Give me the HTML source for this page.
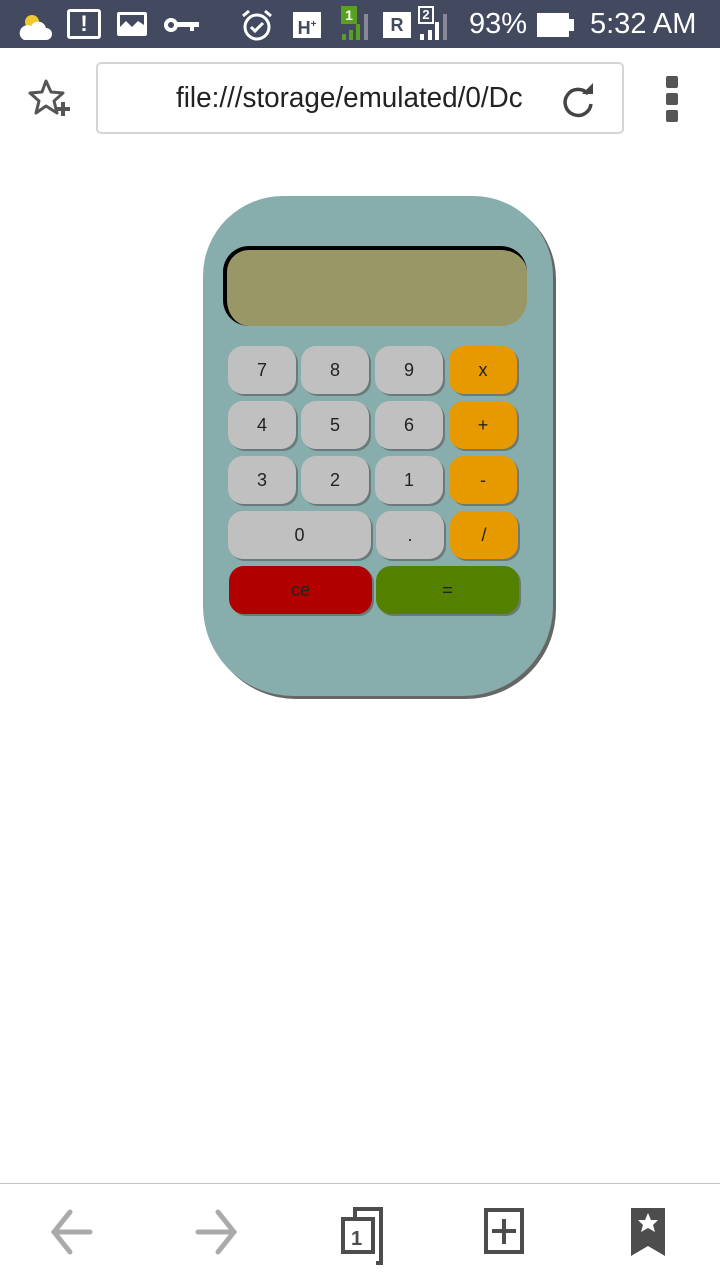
<!DOCTYPE html>
<html><head><meta charset="utf-8"><style>
*{margin:0;padding:0;box-sizing:border-box}
body{width:720px;height:1280px;background:#fff;position:relative;overflow:hidden;font-family:"Liberation Sans",sans-serif}
.sb{position:absolute;left:0;top:0;width:720px;height:48px;background:#434a60;color:#fff}
.abs{position:absolute}
.url{position:absolute;left:96px;top:62px;width:528px;height:72px;border:2px solid #d4d4d4;border-radius:5px}
.calc{position:absolute;left:203px;top:196px;width:350px;height:500px;background:#87adac;border-radius:80px 80px 90px 90px;box-shadow:3px 3px 0 #666}
.disp{position:absolute;left:223px;top:246px;width:304px;height:80px;background:#999766;border-radius:26px;border-top:4px solid #000;border-left:4px solid #000}
.b{position:absolute;width:68px;height:48px;border-radius:15px;background:#c0c0c0;font-size:18px;color:#222;display:flex;align-items:center;justify-content:center;box-shadow:2px 2px 0 #6a7a7a}
.o{background:#e69a00}
</style></head><body>
<div class="sb">
<svg class="abs" style="left:18px;top:8px" width="38" height="34"><circle cx="14" cy="14" r="7" fill="#f0c830"/><path d="M6 32h22a6 6 0 0 0 0-12 8 8 0 0 0-15-2 6 6 0 0 0-7 14z" fill="#fff"/></svg>
<div class="abs" style="left:67px;top:9px;width:34px;height:30px;border:3px solid #fff;border-radius:3px;color:#fff;font-weight:bold;font-size:22px;text-align:center;line-height:24px">!</div>
<div class="abs" style="left:117px;top:12px;width:30px;height:24px;border:3px solid #fff;border-radius:2px"><svg width="24" height="18"><path d="M0 18L0 12 6 6 12 12 18 6 24 10 24 18z" fill="#fff"/></svg></div>
<svg class="abs" style="left:162px;top:15px" width="38" height="20"><circle cx="9" cy="10" r="7" fill="#fff"/><circle cx="9" cy="10" r="3" fill="#434a60"/><rect x="15" y="7" width="22" height="5" fill="#fff"/><rect x="28" y="10" width="4" height="6" fill="#fff"/></svg>
<svg class="abs" style="left:240px;top:8px" width="34" height="34"><circle cx="17" cy="19" r="12" stroke="#fff" stroke-width="3" fill="none"/><path d="M11 19l4 4 8-8" stroke="#fff" stroke-width="3" fill="none"/><path d="M3 8l6-5M31 8l-6-5" stroke="#fff" stroke-width="3"/></svg>
<div class="abs" style="left:293px;top:12px;width:28px;height:26px;background:#fff;color:#434a60;font-weight:bold;font-size:18px;line-height:26px;text-align:center">H<sup style="font-size:10px">+</sup></div>
<div class="abs" style="left:341px;top:6px;width:16px;height:18px;background:#5aa020;color:#fff;font-size:14px;font-weight:bold;text-align:center;line-height:18px">1</div>
<svg class="abs" style="left:340px;top:10px" width="36" height="32"><rect x="2" y="24" width="4" height="6" fill="#5aa020"/><rect x="9" y="20" width="4" height="10" fill="#5aa020"/><rect x="16" y="14" width="4" height="16" fill="#5aa020"/><rect x="24" y="4" width="4" height="26" fill="#889"/></svg>
<div class="abs" style="left:383px;top:12px;width:28px;height:26px;background:#fff;color:#434a60;font-weight:bold;font-size:18px;line-height:26px;text-align:center">R</div>
<div class="abs" style="left:418px;top:6px;width:16px;height:18px;border:2px solid #fff;color:#fff;font-size:13px;font-weight:bold;text-align:center;line-height:14px">2</div>
<svg class="abs" style="left:418px;top:10px" width="36" height="32"><rect x="2" y="24" width="4" height="6" fill="#fff"/><rect x="10" y="20" width="4" height="10" fill="#fff"/><rect x="17" y="12" width="4" height="18" fill="#fff"/><rect x="25" y="4" width="4" height="26" fill="#889"/></svg>
<div class="abs" style="left:469px;top:8px;font-size:29px">93%</div>
<div class="abs" style="left:537px;top:13px;width:32px;height:24px;background:#fff"></div>
<div class="abs" style="left:569px;top:19px;width:5px;height:12px;background:#fff"></div>
<div class="abs" style="left:590px;top:8px;font-size:29px">5:32 AM</div>
</div>
<svg class="abs" style="left:26px;top:78px" width="48" height="42"><path d="M20 3l5 11 12 1-9 8 3 12-11-7-10 7 3-12-9-8 12-1z" fill="none" stroke="#555" stroke-width="3" stroke-linejoin="round"/><path d="M37 24v14M30 31h14" stroke="#555" stroke-width="4"/></svg>
<div class="url"><div class="abs" style="left:78px;top:18px;font-size:29px;color:#222;white-space:nowrap;width:370px;overflow:hidden;transform:scaleX(0.96);transform-origin:left">file:///storage/emulated/0/Dc</div>
<svg class="abs" style="left:460px;top:16px" width="40" height="40"><path d="M30 14A13 13 0 1 0 33 24" fill="none" stroke="#444" stroke-width="3.5"/><path d="M24 14h11V3z" fill="#444"/></svg></div>
<div class="abs" style="left:666px;top:76px;width:12px;height:12px;background:#555;border-radius:2px"></div>
<div class="abs" style="left:666px;top:93px;width:12px;height:12px;background:#555;border-radius:2px"></div>
<div class="abs" style="left:666px;top:110px;width:12px;height:12px;background:#555;border-radius:2px"></div>

<div class="calc"></div>
<div class="disp"></div>
<div class="b" style="left:228px;top:346px">7</div><div class="b" style="left:301px;top:346px">8</div><div class="b" style="left:375px;top:346px">9</div><div class="b o" style="left:449px;top:346px">x</div>
<div class="b" style="left:228px;top:401px">4</div><div class="b" style="left:301px;top:401px">5</div><div class="b" style="left:375px;top:401px">6</div><div class="b o" style="left:449px;top:401px">+</div>
<div class="b" style="left:228px;top:456px">3</div><div class="b" style="left:301px;top:456px">2</div><div class="b" style="left:375px;top:456px">1</div><div class="b o" style="left:449px;top:456px">-</div>
<div class="b" style="left:228px;top:511px;width:143px">0</div><div class="b" style="left:376px;top:511px">.</div><div class="b o" style="left:450px;top:511px">/</div>
<div class="b" style="left:229px;top:566px;width:143px;background:#b00000">ce</div><div class="b" style="left:376px;top:566px;width:143px;background:#548000">=</div>

<div class="abs" style="left:0;top:1183px;width:720px;height:1px;background:#c4c4c4"></div>
<svg class="abs" style="left:0;top:1200px" width="720" height="70"><g stroke="#aaa" stroke-width="5" stroke-linecap="round" fill="none"><path d="M90 32H54M70 12L54 32 70 52"/><path d="M198 32h36M218 12l16 20-16 20"/></g>
<g stroke="#4d4d4d" stroke-width="4" fill="none"><path d="M355 17V9h26v54h-5"/><rect x="343" y="19" width="30" height="33"/><rect x="486" y="10" width="36" height="42"/><path d="M504 19v25M492 31h24"/></g>
<text x="351" y="45" font-size="20" font-weight="bold" fill="#4d4d4d" font-family="Liberation Sans">1</text>
<path d="M631 8h34v48l-17-10-17 10z" fill="#4d4d4d"/><path d="M648 13l3 7 7 0-5 5 2 7-7-4-7 4 2-7-5-5 7 0z" fill="#fff"/></svg>
</body></html>
